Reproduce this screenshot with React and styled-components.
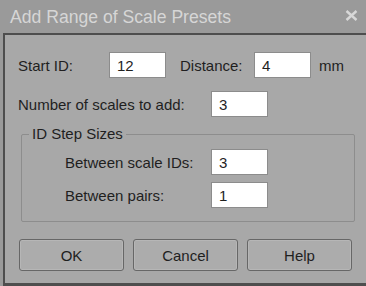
import styled, { createGlobalStyle } from "styled-components";

const GlobalStyle = createGlobalStyle`
  html, body {
    margin: 0;
    padding: 0;
    background: #9a9a9a;
  }
  body {
    font-family: "Liberation Sans", Arial, sans-serif;
  }
`;

const Window = styled.div`
  width: 366px;
  height: 286px;
  background: #9a9a9a;
  display: flex;
  flex-direction: column;
  overflow: hidden;
`;
const TitleBar = styled.div`
  height: 33px;
  display: flex;
  align-items: center;
  justify-content: space-between;
  padding: 0 8px 0 10px;
  box-sizing: border-box;
`;
const Title = styled.span`
  font-size: 17.6px;
  color: #d6d6d6;
  margin-top: 2px;
`;
const Close = styled.svg`
  width: 13px;
  height: 11px;
  margin-top: -3px;
`;
const Frame = styled.div`
  flex: 1;
  margin-left: 3px;
  background: #a8a8a8;
  border-top: 2px solid #4e4e4e;
  border-left: 2px solid #4e4e4e;
  border-bottom: 3px solid #4e4e4e;
  padding: 17px 11px 0 13px;
  display: flex;
  flex-direction: column;
`;
const Row = styled.div`
  display: flex;
  align-items: center;
  height: 26px;
  margin-bottom: ${(p) => p.$gap || 0}px;
  padding-left: ${(p) => p.$indent || 0}px;
`;
const Label = styled.span`
  width: ${(p) => p.$w}px;
  font-size: 15px;
  color: #1f1f1f;
  flex-shrink: 0;
`;
const Field = styled.input`
  width: 57px;
  height: 26px;
  box-sizing: border-box;
  border: 1px solid #8c8c8c;
  background: #fff;
  font-family: inherit;
  font-size: 15px;
  color: #1f1f1f;
  padding: 0 0 0 7px;
  margin: 0 ${(p) => p.$after || 0}px 0 0;
  outline: none;
`;
const Group = styled.fieldset`
  margin: 9px 0 0 3px;
  padding: 7px 0 13px 0;
  border: 1px solid #8d8d8d;
  border-radius: 2px;
`;
const Legend = styled.legend`
  font-size: 15px;
  line-height: 16px;
  color: #1f1f1f;
  padding: 0 3px;
  margin-left: 7px;
`;
const ButtonRow = styled.div`
  display: flex;
  gap: 9px;
  margin: 17px 0 0 1px;
`;
const Button = styled.button`
  width: 105px;
  height: 32px;
  border: 1px solid #676767;
  border-radius: 3px;
  box-shadow: inset 0 0 0 1px #b6b6b6;
  background: #acacac;
  font-family: inherit;
  font-size: 15px;
  color: #1f1f1f;
  padding: 0;
`;

export default function App() {
  return (
    <>
      <GlobalStyle />
      <Window>
        <TitleBar>
          <Title>Add Range of Scale Presets</Title>
          <Close viewBox="0 0 13 11">
            <path d="M1.5 1 L11.5 10 M11.5 1 L1.5 10" stroke="#d8d8d8" strokeWidth="2.4" />
          </Close>
        </TitleBar>
        <Frame>
          <Row $gap={13}>
            <Label $w={91}>Start ID:</Label>
            <Field defaultValue="12" $after={14} />
            <Label $w={74}>Distance:</Label>
            <Field defaultValue="4" $after={8} />
            <Label $w={30}>mm</Label>
          </Row>
          <Row>
            <Label $w={193}>Number of scales to add:</Label>
            <Field defaultValue="3" />
          </Row>
          <Group>
            <Legend>ID Step Sizes</Legend>
            <Row $gap={7} $indent={43}>
              <Label $w={146}>Between scale IDs:</Label>
              <Field defaultValue="3" />
            </Row>
            <Row $indent={43}>
              <Label $w={146}>Between pairs:</Label>
              <Field defaultValue="1" />
            </Row>
          </Group>
          <ButtonRow>
            <Button>OK</Button>
            <Button>Cancel</Button>
            <Button>Help</Button>
          </ButtonRow>
        </Frame>
      </Window>
    </>
  );
}
